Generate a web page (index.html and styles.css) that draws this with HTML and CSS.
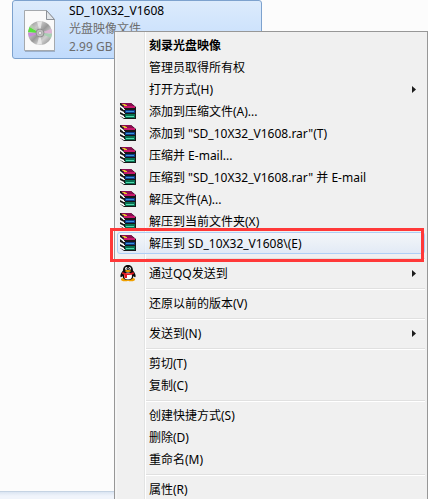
FILE: index.html
```html
<!DOCTYPE html>
<html lang="zh-CN">
<head>
  <meta charset="UTF-8">
  <title>SD_10X32_V1608</title>
  <link rel="stylesheet" href="styles.css">
</head>
<body>
  <!-- Shared icons -->
  <svg class="symbols" aria-hidden="true">
    <symbol id="rar" viewBox="0 0 18 18">
      <path d="M1 1h11l5 4v12H5L1 14z" fill="#181818"/>
      <path d="M2 1h10l4 4H5z" fill="#8c0c50"/>
      <path d="M5 4h11v2H5z" fill="#c8186c"/>
      <path d="M3 2h3l1 1H4zM5 3h3v1H5z" fill="#e8c828"/>
      <path d="M1 3l4 3v2L1 5zM1 8l4 2v2l-4-2zM1 12l4 2v2l-4-2z" fill="#fff"/>
      <path d="M4 7h2v1H4zM4 11h2v1H4zM4 15h2v1H4z" fill="#ddd"/>
      <path d="M6 8h10v3H6z" fill="#0c3c88"/>
      <path d="M7 9h8v1H7z" fill="#3c90d8"/>
      <path d="M6 12h10v4H6z" fill="#087050"/>
      <path d="M7 14h8v1H7z" fill="#50d8b0"/>
    </symbol>
    <symbol id="qq" viewBox="0 0 18 18">
      <ellipse cx="6" cy="15.500" rx="4" ry="1.800" fill="#f0a000"/>
      <ellipse cx="12" cy="15.500" rx="4" ry="1.800" fill="#f0a000"/>
      <path d="M9 1C5.500 1 4 3.500 4 6.500 2 9 1 11 1.500 13c.7.500 1.500-.3 2-1C4 15 6 16 9 16s5-1 5.500-4c.5.700 1.300 1.500 2 1 .5-2-.5-4-2.500-6.500C14 3.500 12.500 1 9 1z" fill="#0a0a0a"/>
      <ellipse cx="9" cy="12" rx="4" ry="3.500" fill="#fff"/>
      <ellipse cx="7.300" cy="4.500" rx="1.200" ry="1.600" fill="#fff"/>
      <ellipse cx="10.700" cy="4.500" rx="1.200" ry="1.600" fill="#fff"/>
      <path d="M7.500 4h.8v1.500h-.8zM10 4h.8v1.500H10z" fill="#111"/>
      <ellipse cx="9" cy="7" rx="3" ry="1" fill="#f5a800"/>
      <path d="M3.500 8c3 1.800 8 1.800 11 0l.5 1.800c-2 1-4 1.300-7 1.300V14H5.300v-3.300L3 9.800z" fill="#e51c23"/>
    </symbol>
    <symbol id="arrow" viewBox="0 0 4 7">
      <path d="M0 0l4 3.500L0 7z" fill="#1c1c1c"/>
    </symbol>
  </svg>

  <main class="explorer">
    <div class="file">
      <svg class="file-icon" viewBox="0 0 34 44" aria-hidden="true">
        <defs>
          <linearGradient id="disc" x1="0" y1="0" x2="1" y2="1">
            <stop offset="0" stop-color="#8a8a8a"/>
            <stop offset=".3" stop-color="#c8c8c8"/>
            <stop offset=".5" stop-color="#989898"/>
            <stop offset=".7" stop-color="#d0d0d0"/>
            <stop offset="1" stop-color="#7c7c7c"/>
          </linearGradient>
        </defs>
        <path d="M2 2h22l8 9v32H2z" fill="#8293a8" opacity=".6"/>
        <path d="M1.500 1.500h22l8 9v31h-30z" fill="#fafafa" stroke="#a5a9ad"/>
        <path d="M23.500 1.500v9h8z" fill="#e2e6ea" stroke="#8d9299"/>
        <circle cx="17" cy="24" r="12" fill="url(#disc)"/>
        <path d="M17 24L6.500 18 5 23z" fill="#58e23c"/>
        <path d="M17 24L8.500 15.500 6.500 18z" fill="#b8c8b0"/>
        <path d="M17 24L5 24l1 4z" fill="#c98ad8"/>
        <path d="M17 24l11.500-4 .5 4z" fill="#dcb4d4"/>
        <path d="M17 24l12 1-1 4z" fill="#a8d0b4"/>
        <path d="M17 24l-3-11.500 5-.2zM17 24l-3 11.500h5z" fill="#f4f4f4" opacity=".7"/>
        <circle cx="17" cy="24" r="4" fill="#bcbcbc" stroke="#909090"/>
        <circle cx="17" cy="24" r="1.500" fill="#fff" stroke="#aaa"/>
      </svg>
      <div class="file-info">
        <span class="file-name">SD_10X32_V1608</span>
        <span>光盘映像文件</span>
        <span>2.99 GB</span>
      </div>
    </div>
    <footer class="details"></footer>
  </main>

  <!-- Context menu -->
  <div class="menu">
    <button class="item default" type="button">刻录光盘映像</button>
    <button class="item" type="button">管理员取得所有权</button>
    <button class="item" type="button">打开方式(H)<svg class="arrow"><use href="#arrow"/></svg></button>
    <button class="item" type="button"><svg class="icon"><use href="#rar"/></svg>添加到压缩文件(A)...</button>
    <button class="item" type="button"><svg class="icon"><use href="#rar"/></svg>添加到 "SD_10X32_V1608.rar"(T)</button>
    <button class="item" type="button"><svg class="icon"><use href="#rar"/></svg>压缩并 E-mail...</button>
    <button class="item" type="button"><svg class="icon"><use href="#rar"/></svg>压缩到 "SD_10X32_V1608.rar" 并 E-mail</button>
    <button class="item" type="button"><svg class="icon"><use href="#rar"/></svg>解压文件(A)...</button>
    <button class="item" type="button"><svg class="icon"><use href="#rar"/></svg>解压到当前文件夹(X)</button>
    <div class="marked">
      <button class="item active" type="button"><svg class="icon"><use href="#rar"/></svg>解压到 SD_10X32_V1608\(E)</button>
    </div>
    <hr>
    <button class="item" type="button"><svg class="icon"><use href="#qq"/></svg>通过QQ发送到<svg class="arrow"><use href="#arrow"/></svg></button>
    <hr>
    <button class="item" type="button">还原以前的版本(V)</button>
    <hr>
    <button class="item" type="button">发送到(N)<svg class="arrow"><use href="#arrow"/></svg></button>
    <hr>
    <button class="item" type="button">剪切(T)</button>
    <button class="item" type="button">复制(C)</button>
    <hr>
    <button class="item" type="button">创建快捷方式(S)</button>
    <button class="item" type="button">删除(D)</button>
    <button class="item" type="button">重命名(M)</button>
    <hr>
    <button class="item" type="button">属性(R)</button>
  </div>
</body>
</html>
```
FILE: styles.css
```css
* {
  box-sizing: border-box;
}

body {
  margin: 0;
  height: 100vh;
  position: relative;
  overflow: hidden;
  background-color: #fcfcfc;
  font-family: "Noto Sans", "Noto Sans CJK SC", sans-serif;
  font-size: 12px;
  color: #000;
}

.symbols {
  position: absolute;
  width: 0;
  height: 0;
}

/* Explorer window behind the menu */
.explorer {
  display: flex;
  flex-direction: column;
  justify-content: space-between;
  height: 100%;
}

.file {
  display: flex;
  gap: 12px;
  width: 250px;
  margin-left: 12px;
  padding: 1px 10px 2px;
  border: 1px solid #7da2ce;
  border-radius: 3px;
  background: linear-gradient(#dcebfc, #c1dbfc);
}

.file-icon {
  width: 34px;
  height: 44px;
  margin-top: 7px;
}

.file-info {
  display: flex;
  flex-direction: column;
  line-height: 18px;
  color: #6d6d6d;
}

.file-name {
  color: #000;
}

.details {
  height: 8px;
  border-top: 1px solid #c5d3e3;
  background: linear-gradient(#dbe5f2, #f0f4fb 4px);
}

/* Context menu */
.menu {
  position: absolute;
  top: 31px;
  left: 114px;
  right: 0;
  padding: 2px;
  border: 1px solid #979797;
  background: linear-gradient(to right, #f5f5f5 2px, #f0f0f0 2px, #f0f0f0 29px, #e2e3e3 29px, #e2e3e3 30px, #fff 30px, #fff 31px, #f0f0f0 31px);
}

.item {
  position: relative;
  display: flex;
  align-items: center;
  width: 100%;
  height: 22px;
  padding: 0 8px 0 31px;
  border: 1px solid transparent;
  border-radius: 3px;
  background: none;
  font: inherit;
  color: inherit;
  text-align: left;
  white-space: nowrap;
}

.default {
  font-weight: bold;
}

.active {
  border-color: #aecff7;
  background: linear-gradient(rgba(245, 248, 252, 0.7), rgba(220, 232, 248, 0.7));
}

.icon {
  width: 18px;
  height: 18px;
  margin-left: -30px;
  margin-right: 12px;
}

.arrow {
  width: 4px;
  height: 7px;
  margin-left: auto;
}

/* Red frame round the extract command */
.marked {
  position: relative;
}

.marked::after {
  content: "";
  position: absolute;
  z-index: 1;
  top: -4px;
  bottom: -8px;
  left: -7px;
  right: 1px;
  border: 3px solid #ff3838;
  pointer-events: none;
}

hr {
  height: 2px;
  margin: 4px 0 2px 29px;
  border: 0;
  border-top: 1px solid #e0e0e0;
  background-color: #fff;
}
```
